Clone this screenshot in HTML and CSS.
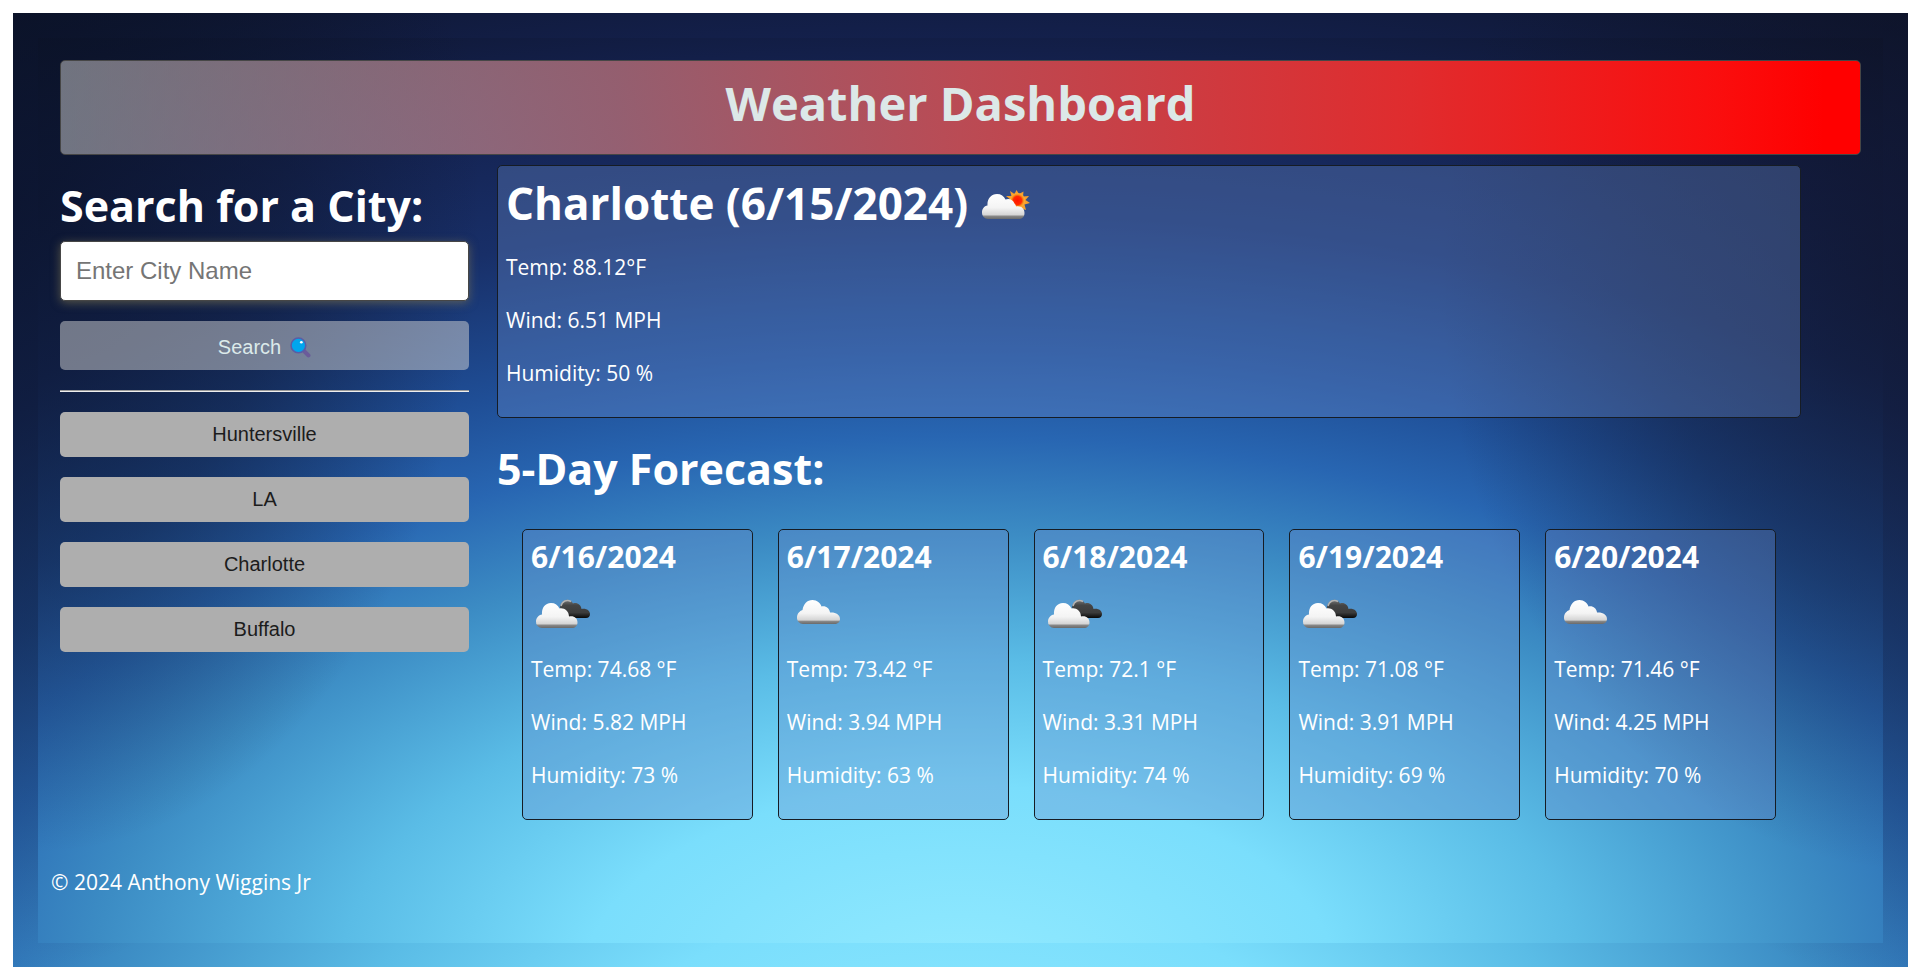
FILE: index.html
```html
<!DOCTYPE html>
<html lang="en">
<head>
<meta charset="utf-8">
<meta name="viewport" content="width=device-width, initial-scale=1">
<title>Weather Dashboard</title>
<link rel="stylesheet" href="styles.css">
</head>
<body>
<svg class="defs" aria-hidden="true">
  <defs>
    <linearGradient id="light" x1="0" y1="0" x2="0" y2="1">
      <stop offset="0" stop-color="#fff"/><stop offset=".55" stop-color="#f4f4f4"/><stop offset=".84" stop-color="#d4d4d4"/><stop offset=".88" stop-color="#8a8a8a"/><stop offset="1" stop-color="#6a6a6a"/>
    </linearGradient>
    <linearGradient id="dark" x1="0" y1="0" x2="0" y2="1">
      <stop offset="0" stop-color="#777"/><stop offset=".3" stop-color="#444"/><stop offset=".7" stop-color="#3c3c3c"/><stop offset="1" stop-color="#080808"/>
    </linearGradient>
    <radialGradient id="sun">
      <stop offset="0" stop-color="#ff1200"/><stop offset=".55" stop-color="#ff2a00"/><stop offset=".8" stop-color="#f8961c"/><stop offset="1" stop-color="#fbb040"/>
    </radialGradient>
    <symbol id="cloud" viewBox="0 0 43 24">
      <path fill="url(#light)" d="M6 24A6 6 0 0 1 0 17.500C0 14 2.500 11 5.500 10C6.500 4 10 0 15.500 0C20 0 23.500 3 24.500 6.500C28.500 5.500 32.500 8 33 12.500C38.500 12 43 14.500 43 19C43 22 40.500 24 37.500 24Z"/>
    </symbol>
    <symbol id="storm" viewBox="0 0 32 19">
      <path fill="url(#dark)" d="M6 19C1 15 0 9 2 5C4.500 0 11 -1 14 4.500C18 3 22 6 22.500 10C27 9 31 11.500 31 15C31 17.500 29.500 19 27 19Z"/>
      <path fill="none" stroke="#b4b4b4" stroke-width="1.500" d="M2 7C3 2 8 0 12 2.500"/>
    </symbol>
    <symbol id="overcast" viewBox="0 0 60 60">
      <use href="#storm" x="28" y="15" width="32" height="19"/>
      <path fill="url(#light)" d="M11 44A6 6 0 0 1 5 37.500C5 34 7.500 31 11 30.500C10.500 24 14 19 20 19C24 19 27 21 28.500 24.500C33 23.500 38 27 38 32.500C43 31.500 46.500 34 46.500 38.500C46.500 42 44 44 41 44Z"/>
    </symbol>
    <symbol id="clouds" viewBox="0 0 60 60">
      <use href="#cloud" x="10" y="16" width="43" height="24"/>
    </symbol>
  </defs>
</svg>
<div class="page">
  <div class="panel">
    <header class="banner"><h1>Weather Dashboard</h1></header>
    <div class="content">
      <aside class="sidebar">
        <form class="search">
          <h2><label for="city">Search for a City:</label></h2>
          <input id="city" type="text" placeholder="Enter City Name">
          <button class="search-btn" type="button">Search
            <svg class="lens" viewBox="0 0 20 20" aria-hidden="true"><path d="M12.500 12.500L17.500 17.500" stroke="#6b5b9a" stroke-width="4" stroke-linecap="round"/><circle cx="8" cy="8" r="7" fill="#00a6ed" stroke="#5a5da6" stroke-width="1.500"/><circle cx="10.800" cy="5" r="1.300" fill="#fff"/></svg>
          </button>
        </form>
        <hr>
        <div class="history">
          <button type="button">Huntersville</button>
          <button type="button">LA</button>
          <button type="button">Charlotte</button>
          <button type="button">Buffalo</button>
        </div>
      </aside>
      <main class="weather">
        <section class="today">
          <h2>Charlotte (6/15/2024)
            <svg class="today-icon" viewBox="0 0 50 30" aria-hidden="true"><path fill="#f8a02c" d="M36.500 0L39 4L43.500 1.500L43 6.500L49 6L45.500 10L50 13L44.500 14.500L46 20L40 18L28 15L31 10L26 6L31.500 6L30 1L34.500 4Z"/><circle cx="37.500" cy="10.500" r="7.500" fill="url(#sun)"/><path fill="url(#light)" d="M8 29A6 6 0 0 1 2 22.500C2 19 4 16 7.500 15.500C7 9 11 4 17 4C21 4 24 6 25.500 9.500C29 8 33 9.500 34.500 13.500C35.500 14.500 36 15.500 36 16.500C41 15.500 44.500 18.500 44.500 23C44.500 27 42 29 38.500 29Z"/></svg>
          </h2>
          <p>Temp: 88.12°F</p>
          <p>Wind: 6.51 MPH</p>
          <p>Humidity: 50 %</p>
        </section>
        <h2 class="forecast-title">5-Day Forecast:</h2>
        <section class="forecast">
          <article class="day"><h3>6/16/2024</h3><svg class="icon" aria-hidden="true"><use href="#overcast"/></svg><p>Temp: 74.68 °F</p><p>Wind: 5.82 MPH</p><p>Humidity: 73 %</p></article>
          <article class="day"><h3>6/17/2024</h3><svg class="icon" aria-hidden="true"><use href="#clouds"/></svg><p>Temp: 73.42 °F</p><p>Wind: 3.94 MPH</p><p>Humidity: 63 %</p></article>
          <article class="day"><h3>6/18/2024</h3><svg class="icon" aria-hidden="true"><use href="#overcast"/></svg><p>Temp: 72.1 °F</p><p>Wind: 3.31 MPH</p><p>Humidity: 74 %</p></article>
          <article class="day"><h3>6/19/2024</h3><svg class="icon" aria-hidden="true"><use href="#overcast"/></svg><p>Temp: 71.08 °F</p><p>Wind: 3.91 MPH</p><p>Humidity: 69 %</p></article>
          <article class="day"><h3>6/20/2024</h3><svg class="icon" aria-hidden="true"><use href="#clouds"/></svg><p>Temp: 71.46 °F</p><p>Wind: 4.25 MPH</p><p>Humidity: 70 %</p></article>
        </section>
      </main>
    </div>
    <footer>© 2024 Anthony Wiggins Jr</footer>
  </div>
</div>
</body>
</html>
```
FILE: styles.css
```css
* { box-sizing: border-box; }

body {
  margin: 0;
  padding: 13px 12px 0 13px;
  background: #fff;
  color: #fff;
  font-family: "Segoe UI", "Open Sans", "Noto Sans", sans-serif;
  font-size: 21px;
  line-height: 30px;
}

h1, h2, h3, p { margin: 0; }

.defs { position: absolute; width: 0; height: 0; }

.page, .panel {
  background-color: #0b1226;
  background-image:
    radial-gradient(ellipse 24% 72% at 0% 18%, rgba(10, 18, 40, .75) 0%, rgba(12, 20, 42, .45) 55%, rgba(12, 20, 42, 0) 100%),
    radial-gradient(ellipse 26% 66% at 102% 26%, rgba(16, 20, 42, .75) 0%, rgba(16, 22, 46, .42) 55%, rgba(16, 22, 46, 0) 100%),
    radial-gradient(ellipse 102% 107% at 50% 104%, #92eaff 0%, #7adefc 20%, #5abce6 33%, #3c8cc4 46%, #2866b2 56%, #1f4e96 65%, #182f68 79%, #14214e 94%, #0c1226 110%);
}

.page {
  padding: 25px 25px 24px;
  background-size: 100% 112%;
}

.panel { padding: 22px 13px; }

.banner {
  height: 95px;
  margin: 0 9px;
  border: 1px solid #464646;
  border-radius: 5px;
  background: linear-gradient(to right, rgba(211, 211, 211, .5), rgba(180, 110, 120, .8) 31%, rgba(200, 78, 84, .92) 50%, #e02c2e 75%, #fa0e0e 92%, red 98%);
  color: #dce8e8;
  text-align: center;
}

h1 { font-size: 47px; line-height: 84px; }
h2 { font-size: 43px; line-height: 58px; }
h3 { font-size: 30px; line-height: 38px; }

.content {
  display: flex;
  gap: 28px;
  margin: 10px 9px 0;
}

.sidebar { flex: 0 0 409px; padding-top: 12px; }

.search { display: flex; flex-direction: column; }

.search input {
  height: 60px;
  margin-top: 6px;
  padding: 0 15px;
  border: 1px solid #464646;
  border-radius: 5px;
  background: #fff;
  box-shadow: 0 2px 10px rgba(130, 120, 80, .6);
  font: 24px "Liberation Sans", Arial, sans-serif;
}

.search input::placeholder { color: #757575; }

button {
  border: 0;
  border-radius: 5px;
  font: 20px "Liberation Sans", Arial, sans-serif;
}

.search-btn {
  display: flex;
  align-items: center;
  justify-content: center;
  gap: 9px;
  height: 49px;
  margin-top: 20px;
  padding-top: 4px;
  background: rgba(211, 211, 211, .5);
  color: #dceaea;
}

.lens { width: 21px; height: 21px; }

hr {
  height: 2px;
  margin: 20px 0;
  border: 0;
  border-top: 1px solid #9a9a9a;
  background: #eee;
}

.history { display: grid; gap: 20px; }

.history button { height: 45px; background: #aeaeae; color: #1c1c1c; }

.weather { flex: 1; min-width: 0; margin-right: 60px; }

.today, .day {
  border: 1px solid #161c24;
  border-radius: 5px;
  background: rgba(107, 140, 203, .35);
}

.today { padding: 8px 8px 29px; }

.today h2 { margin-bottom: 20px; font-size: 44px; }

.today-icon { width: 50px; height: 30px; }

.weather p + p { margin-top: 23px; }

.forecast-title { margin-top: 22px; }

.forecast {
  display: grid;
  grid-template-columns: repeat(5, 1fr);
  gap: 25px;
  margin-top: 31px;
  padding: 0 25px;
}

.day { padding: 8px 8px 29px; }

.icon { display: block; width: 60px; height: 60px; margin: 8px 0 10px; }

footer { margin-top: 47px; padding-bottom: 24px; }
```
